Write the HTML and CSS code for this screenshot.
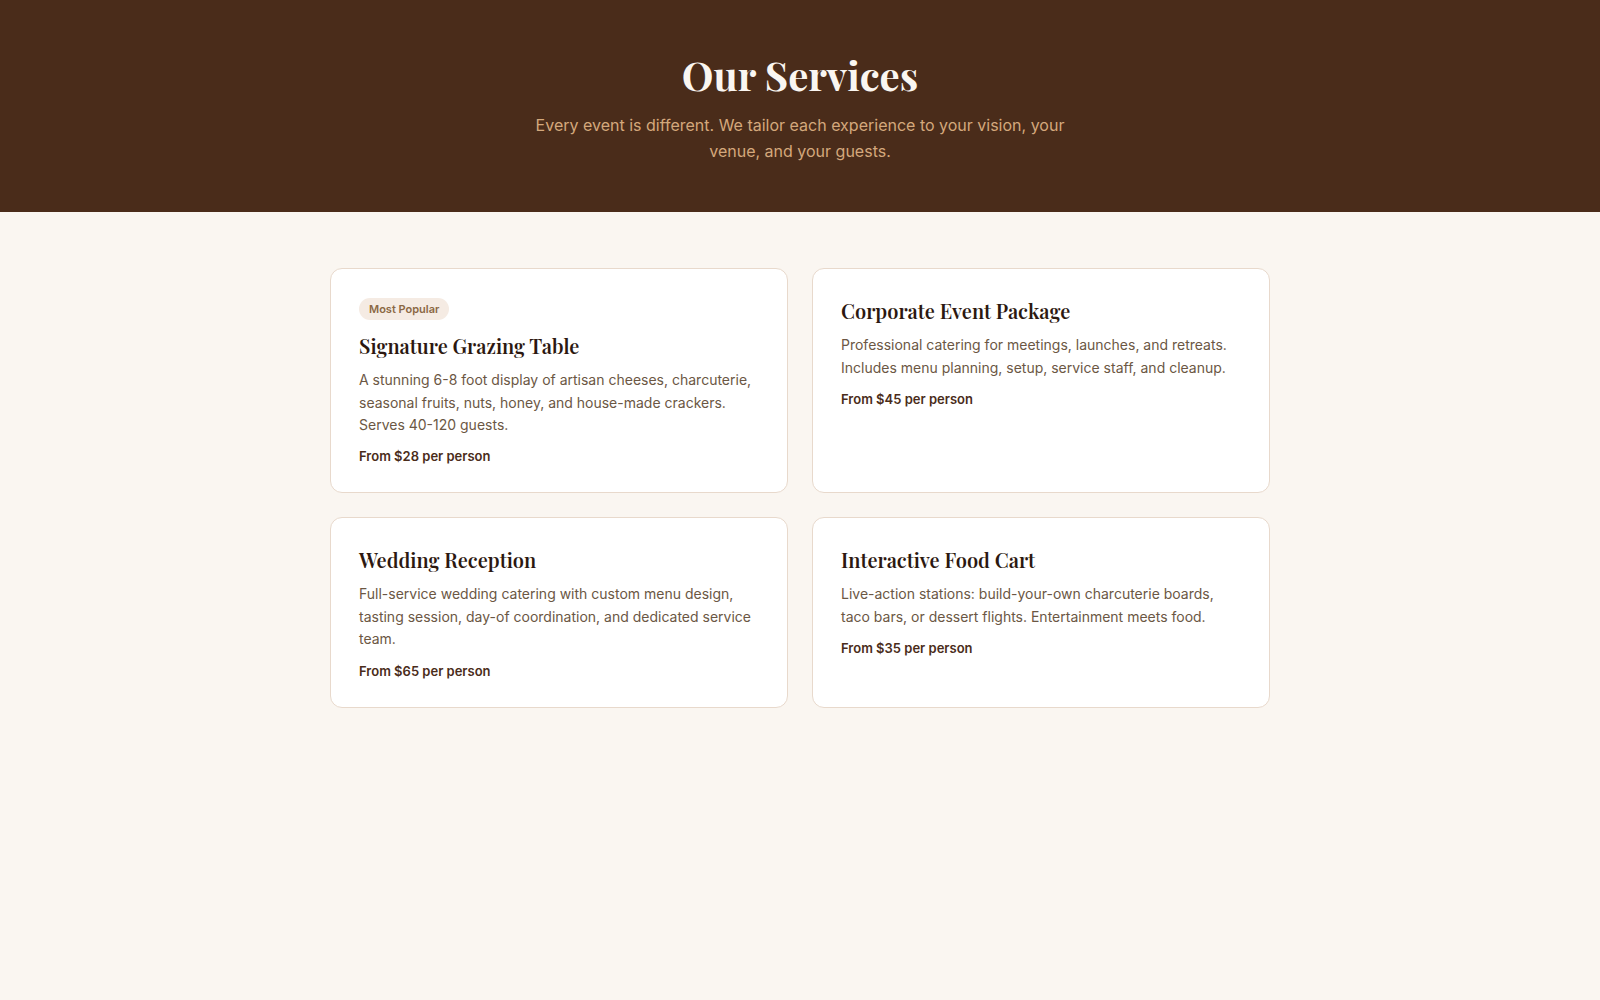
FILE: index.html
```html
<!DOCTYPE html>
<html lang="en">
<head>
<meta charset="utf-8">
<meta name="viewport" content="width=device-width, initial-scale=1">
<title>Our Services</title>
<link rel="stylesheet" href="styles.css">
</head>
<body>
<header class="hero">
  <h1 class="hero-title">Our Services</h1>
  <p class="hero-text">Every event is different. We tailor each experience to your vision, your venue, and your guests.</p>
</header>
<main class="services">
  <article class="card">
    <span class="badge">Most Popular</span>
    <h2 class="card-title">Signature Grazing Table</h2>
    <p class="card-text">A stunning 6-8 foot display of artisan cheeses, charcuterie, seasonal fruits, nuts, honey, and house-made crackers. Serves 40-120 guests.</p>
    <p class="price">From $28 per person</p>
  </article>
  <article class="card">
    <h2 class="card-title">Corporate Event Package</h2>
    <p class="card-text">Professional catering for meetings, launches, and retreats. Includes menu planning, setup, service staff, and cleanup.</p>
    <p class="price">From $45 per person</p>
  </article>
  <article class="card">
    <h2 class="card-title">Wedding Reception</h2>
    <p class="card-text">Full-service wedding catering with custom menu design, tasting session, day-of coordination, and dedicated service team.</p>
    <p class="price">From $65 per person</p>
  </article>
  <article class="card">
    <h2 class="card-title">Interactive Food Cart</h2>
    <p class="card-text">Live-action stations: build-your-own charcuterie boards, taco bars, or dessert flights. Entertainment meets food.</p>
    <p class="price">From $35 per person</p>
  </article>
</main>
</body>
</html>
```

FILE: styles.css
```css
* { box-sizing: border-box; margin: 0; padding: 0; }
body {
  background: #faf6f1;
  color: #2c1810;
  font-family: Inter, "Liberation Sans", sans-serif;
}
.hero {
  background: #4a2c1a;
  padding: 48px 24px;
  text-align: center;
}
.hero-title {
  color: #faf6f1;
  font-family: "Playfair Display", "Liberation Serif", serif;
  font-size: 40px;
  line-height: 53px;
  font-weight: 700;
  margin-bottom: 12px;
}
.hero-text {
  color: #d4a87c;
  font-size: 16px;
  line-height: 1.6;
  max-width: 560px;
  margin: 0 auto;
}
.services {
  display: grid;
  grid-template-columns: repeat(2, 1fr);
  gap: 24px;
  max-width: 988px;
  margin: 0 auto;
  padding: 56px 24px;
}
.card {
  background: #fff;
  border: 1px solid #e8d9cc;
  border-radius: 12px;
  padding: 28px;
}
.badge {
  display: inline-block;
  background: #f5ebe3;
  color: #8b6844;
  border-radius: 12px;
  padding: 4px 10px;
  font-size: 11px;
  line-height: 14px;
  font-weight: 600;
  margin-bottom: 12px;
}
.card-title {
  color: #2c1810;
  font-family: "Playfair Display", "Liberation Serif", serif;
  font-size: 20px;
  line-height: 27px;
  font-weight: 600;
  margin-bottom: 10px;
}
.card-text {
  color: #6b5744;
  font-size: 14px;
  line-height: 1.6;
  margin-bottom: 12px;
}
.price {
  color: #4a2c1a;
  font-size: 13px;
  line-height: 16px;
  font-weight: 600;
}
```
